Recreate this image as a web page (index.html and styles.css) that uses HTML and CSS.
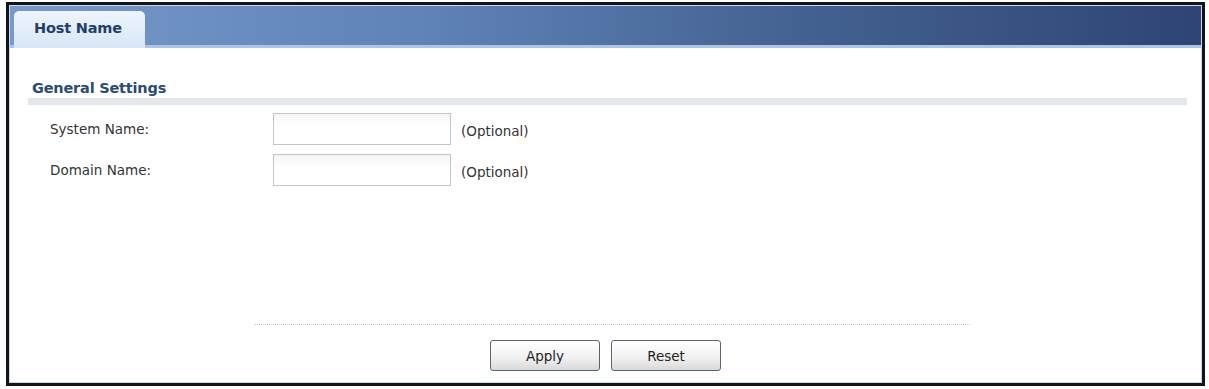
FILE: index.html
```html
<!DOCTYPE html>
<html lang="en">
<head>
    <meta charset="UTF-8">
    <title>Host Name</title>
    <link rel="stylesheet" href="styles.css">
</head>
<body>
    <div class="frame">
        <div class="panel">
            <div class="tab-bar">
                <div class="tab">Host Name</div>
            </div>

            <div class="content">
                <h2 class="section-title">General Settings</h2>
                <div class="form">
                    <div class="form-row">
                        <label class="label">System Name:</label>
                        <input class="text-input" type="text">
                        <span class="hint">(Optional)</span>
                    </div>
                    <div class="form-row">
                        <label class="label">Domain Name:</label>
                        <input class="text-input" type="text">
                        <span class="hint">(Optional)</span>
                    </div>
                </div>
            </div>

            <div class="actions">
                <div class="divider"></div>
                <div class="buttons">
                    <button class="btn">Apply</button>
                    <button class="btn">Reset</button>
                </div>
            </div>
        </div>
    </div>
</body>
</html>
```

FILE: styles.css
```css
* {
    margin: 0;
    padding: 0;
    box-sizing: border-box;
}

body {
    font-family: 'DejaVu Sans', Verdana, sans-serif;
    font-size: 13.5px;
    background: #ffffff;
    color: #333333;
}

.frame {
    margin: 2px 0 0 6px;
    width: 1199px;
    height: 384px;
    border: 3px solid #141414;
    background: #ffffff;
}

.panel {
    height: 100%;
    border: 1px solid #c9d8ea;
    display: flex;
    flex-direction: column;
}

.tab-bar {
    height: 42px;
    padding: 2px 0 0 4px;
    background: linear-gradient(90deg, #7799cb 0%, #5f82b7 35%, #42608f 68%, #2f4573 100%);
    border-bottom: 3px solid #aac5e6;
    display: flex;
    align-items: flex-end;
}

.tab {
    width: 131px;
    height: 37px;
    padding-left: 20px;
    line-height: 35px;
    font-weight: bold;
    font-size: 14.5px;
    letter-spacing: -0.2px;
    color: #213f6d;
    background: linear-gradient(180deg, #eef5fc 0%, #d7e6f6 100%);
    border-radius: 5px 5px 0 0;
    margin-bottom: -3px;
}

.content {
    flex: 1;
    padding: 32px 14px 0 18px;
}

.section-title {
    font-size: 14.5px;
    font-weight: bold;
    letter-spacing: -0.2px;
    color: #2a4a78;
    padding-left: 4px;
    padding-bottom: 2px;
    border-bottom: 7px solid #e3e6eb;
}

.form {
    padding-top: 8px;
    display: flex;
    flex-direction: column;
    gap: 9px;
}

.form-row {
    display: flex;
    align-items: center;
}

.label {
    width: 245px;
    padding-left: 22px;
    color: #333333;
}

.text-input {
    width: 178px;
    height: 32px;
    border: 1px solid #c4c4c4;
    background: linear-gradient(180deg, #f4f4f4 0%, #ffffff 40%);
}

.hint {
    margin-left: 10px;
    margin-top: 4px;
    color: #333333;
}

.actions {
    padding-bottom: 11px;
    display: flex;
    flex-direction: column;
    align-items: center;
}

.divider {
    width: 715px;
    margin-left: 14px;
    border-top: 1px dotted #c8c8c8;
}

.buttons {
    margin-top: 15px;
    display: flex;
    gap: 11px;
}

.btn {
    width: 110px;
    height: 31px;
    font-family: 'DejaVu Sans', Verdana, sans-serif;
    font-size: 13.5px;
    color: #222222;
    border: 1px solid #5a6470;
    border-radius: 3px;
    background: linear-gradient(180deg, #ffffff 0%, #f0f0f0 60%, #d8d8d8 100%);
}
```
